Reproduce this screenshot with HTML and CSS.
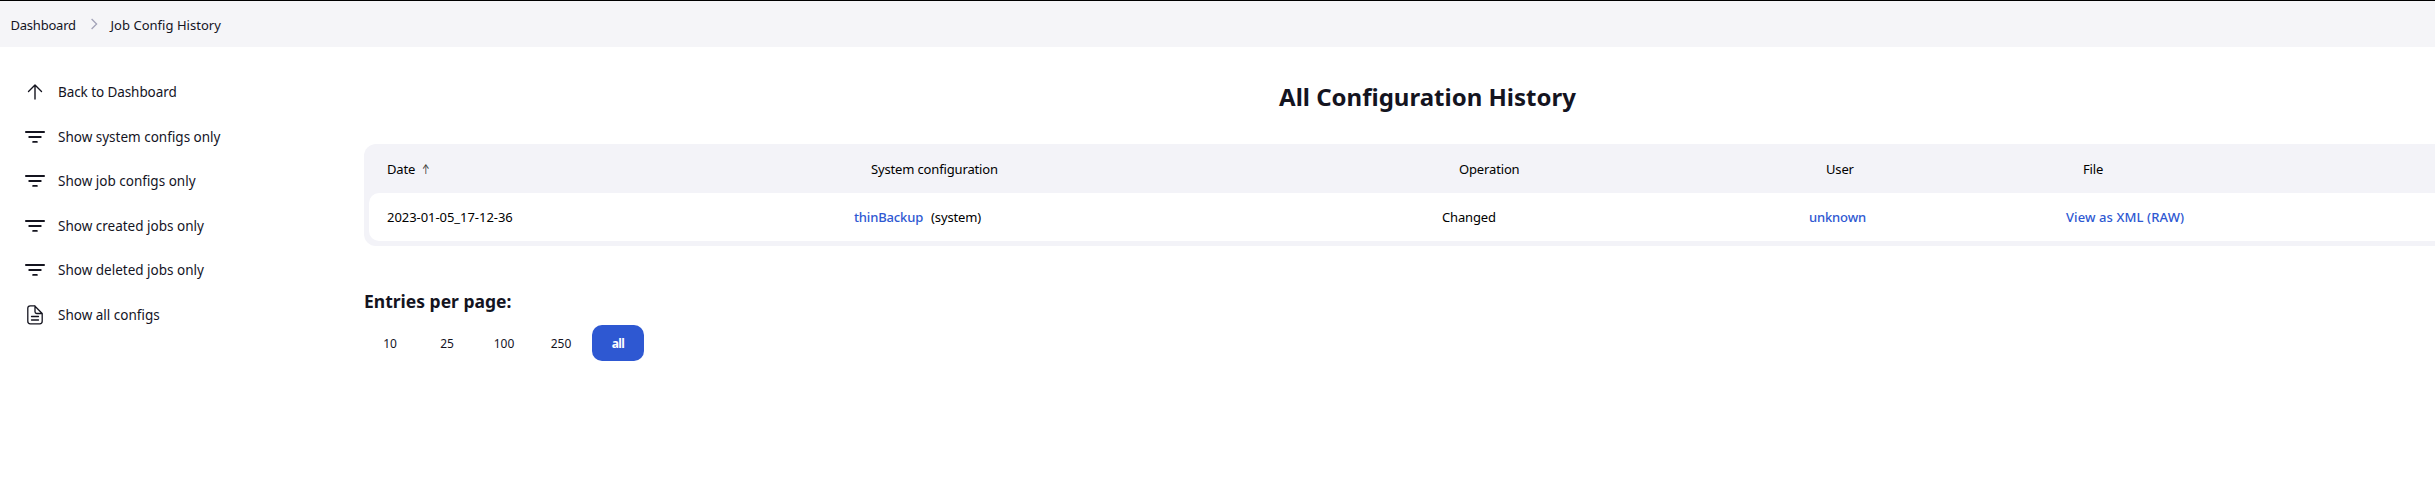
FILE: index.html
```html
<!DOCTYPE html>
<html lang="en">
<head>
<meta charset="utf-8">
<title>All Configuration History</title>
<link rel="stylesheet" href="styles.css">
</head>
<body>
<svg class="sprite" aria-hidden="true">
  <symbol id="filter" viewBox="0 0 20 20">
    <path d="M.9 5h18.200M4.200 10h11.600M8.100 14.900h3.800" fill="none" stroke="currentColor" stroke-width="1.800" stroke-linecap="round"/>
  </symbol>
</svg>
<nav class="breadcrumbs">
  <a class="crumb">Dashboard</a>
  <svg class="chevron" viewBox="0 0 8 12"><path d="M1.600 1 6.600 6l-5 5" fill="none" stroke="currentColor" stroke-width="1.3"/></svg>
  <a class="crumb crumb-current">Job Config History</a>
</nav>
<div class="page">
  <aside class="tasks">
    <a class="task"><svg class="icon" viewBox="0 0 20 20"><path d="M10 17V3.400M3.500 9.500 10 3l6.500 6.500" fill="none" stroke="currentColor" stroke-width="1.400" stroke-linecap="round" stroke-linejoin="round"/></svg><span class="back">Back to Dashboard</span></a>
    <a class="task"><svg class="icon"><use href="#filter"/></svg><span>Show system configs only</span></a>
    <a class="task"><svg class="icon"><use href="#filter"/></svg><span>Show job configs only</span></a>
    <a class="task"><svg class="icon"><use href="#filter"/></svg><span>Show created jobs only</span></a>
    <a class="task"><svg class="icon"><use href="#filter"/></svg><span>Show deleted jobs only</span></a>
    <a class="task"><svg class="icon" viewBox="0 0 20 20"><path d="M17.200 9v7.300a2.500 2.500 0 0 1-2.500 2.500H5.300a2.500 2.500 0 0 1-2.500-2.500V3.300A2.500 2.500 0 0 1 5.300.8H9.500L17.200 8.500ZM10 1v5.800a1.700 1.700 0 0 0 1.700 1.700h5M6.500 11.500h7M6.500 15h7" fill="none" stroke="currentColor" stroke-width="1.300" stroke-linecap="round" stroke-linejoin="round"/></svg><span>Show all configs</span></a>
  </aside>
  <main class="main">
    <h1 class="title">All Configuration History</h1>
    <div class="table">
      <div class="row head">
        <span>Date<span class="sort">↑</span></span><span>System configuration</span><span>Operation</span><span>User</span><span>File</span>
      </div>
      <div class="row entry">
        <span class="date">2023-01-05_17-12-36</span><span><a class="link">thinBackup</a><span class="kind">(system)</span></span><span>Changed</span><span><a class="link">unknown</a></span><span><a class="link raw">View as XML (RAW)</a></span>
      </div>
    </div>
    <h2 class="subtitle">Entries per page:</h2>
    <div class="pager">
      <a class="page-size">10</a><a class="page-size">25</a><a class="page-size">100</a><a class="page-size">250</a><a class="page-size selected">all</a>
    </div>
  </main>
</div>
</body>
</html>
```

FILE: styles.css
```css
* { box-sizing: border-box; }
body {
  margin: 0;
  height: 485px;
  overflow: hidden;
  background: #fff;
  color: #14141f;
  font: 400 13.5px/20px "Noto Sans", "Open Sans", sans-serif;
}
.sprite { display: none; }
.breadcrumbs {
  display: flex;
  align-items: center;
  height: 47px;
  padding: 1px 0 0 10.500px;
  border-top: 1px solid #000;
  background: #f5f5f8;
  font-size: 13px;
}
.crumb { width: 65px; letter-spacing: -0.22px; white-space: nowrap; }
.crumb-current { width: auto; letter-spacing: 0.03px; }
.chevron { width: 8px; height: 12px; margin: 0 13px 1px 14px; color: #a3a3b8; }
.page { display: flex; align-items: flex-start; }
.tasks { width: 364px; flex: none; padding: 23px 0 0 25px; }
.task { display: flex; align-items: center; gap: 13px; height: 44.500px; white-space: nowrap; }
.back { letter-spacing: -0.08px; }
.icon { width: 20px; height: 20px; flex: none; }
.main { width: 2127px; flex: none; padding-top: 33px; }
.title { margin: 0; text-align: center; font-size: 24px; line-height: 34px; font-weight: 700; }
.table {
  margin-top: 30px;
  padding: 0 5px 5px;
  border-radius: 12px;
  background: #f3f3f8;
  color: #000;
}
.row {
  display: grid;
  grid-template-columns: 467px 588px 367px 257px 1fr;
  align-items: center;
  padding-left: 18px;
  white-space: nowrap;
  font-size: 13px;
  letter-spacing: -0.15px;
}
.head { height: 49px; padding-top: 1px; }
.head > span:not(:first-child) { padding-left: 17px; }
.sort {
  display: inline-block;
  margin-left: 7px;
  color: #333;
  font: 13px/16px "Inter", sans-serif;
  transform: scaleX(.7);
  transform-origin: left;
}
.entry { height: 48px; padding-bottom: 1px; border-radius: 10px; background: #fff; }
.date { letter-spacing: -0.05px; }
.link { color: #2e58d2; font-weight: 500; }
.raw { letter-spacing: 0.1px; }
.kind { margin-left: 8px; }
.subtitle { margin: 42px 0 0; font-size: 17.500px; line-height: 26px; font-weight: 700; }
.pager { display: flex; gap: 5px; margin-top: 11px; }
.page-size {
  width: 52px;
  height: 36px;
  border-radius: 10px;
  text-align: center;
  font-size: 12px;
  line-height: 37px;
}
.selected { background: #2e58d2; color: #fff; font-weight: 700; letter-spacing: -0.6px; }
```
